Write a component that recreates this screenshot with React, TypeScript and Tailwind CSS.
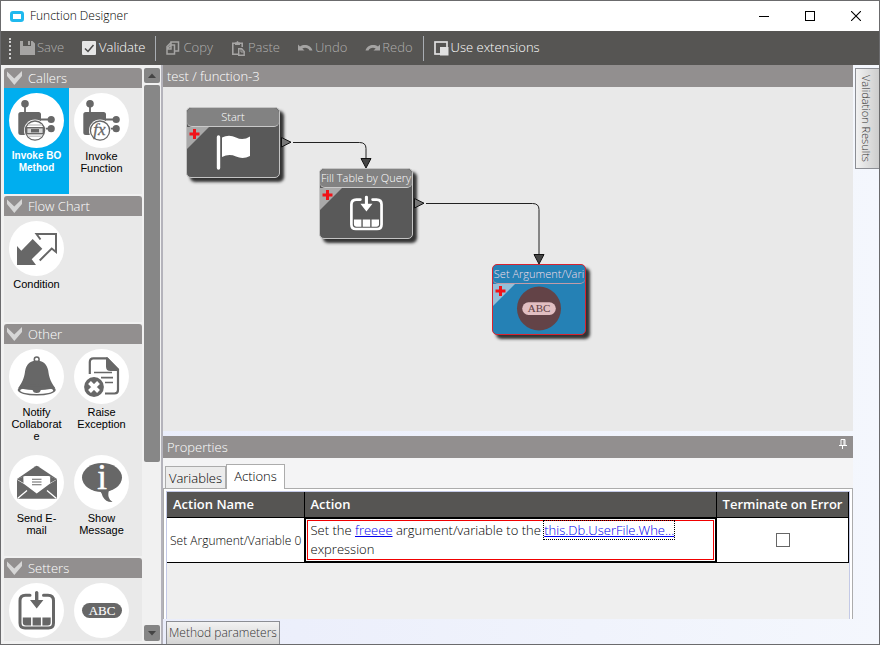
import type { ReactNode } from "react";

const INK = "#676767";

/* ---------- palette icons, all drawn on a 55x55 disc ---------- */

function CallerBase({ children }: { children: ReactNode }) {
  return (
    <>
      <circle cx="16" cy="10.7" r="3.8" fill={INK} />
      <path d="M16 13v7M31 26.5h11M31 35.7h11" stroke={INK} strokeWidth="1.8" />
      <rect x="9.3" y="19" width="22.7" height="23" rx="2.5" fill={INK} />
      <circle cx="42.2" cy="26.5" r="3.6" fill={INK} />
      <circle cx="42.2" cy="35.7" r="3.6" fill={INK} />
      <circle cx="26" cy="37.6" r="11" fill="#fff" />
      <circle cx="26" cy="37.6" r="9.6" fill="#fff" stroke={INK} strokeWidth="1.3" />
      {children}
    </>
  );
}

function InvokeMethodIcon() {
  return (
    <CallerBase>
      <path d="M19 32h14M19 43.300h14" stroke="#c9c9c9" strokeWidth="1.500" />
      <rect x="17.700" y="34.700" width="16.600" height="6" fill="#d4d4d4" stroke={INK} strokeWidth="1.400" />
      <rect x="22" y="36" width="8" height="3.400" fill={INK} />
    </CallerBase>
  );
}

function InvokeFunctionIcon() {
  return (
    <CallerBase>
      <text x="25.5" y="42" textAnchor="middle" fontFamily="Liberation Serif, serif" fontStyle="italic" fontWeight="400" fontSize="17" fill={INK} stroke={INK} strokeWidth=".3">
        fx
      </text>
    </CallerBase>
  );
}

function ConditionIcon() {
  return (
    <>
      <path d="M8 25l4.300 4.700L23.700 18l9.600 9.700-10.600 10.600L27 44H8z" fill={INK} />
      <path d="M31.500 18.500l-4-5.500H47v18l-4.300-3.500-12 12" fill="none" stroke={INK} strokeWidth="2" />
    </>
  );
}

function BellIcon() {
  return (
    <>
      <circle cx="27.700" cy="10.500" r="2.400" fill="none" stroke={INK} strokeWidth="1.500" />
      <path d="M27.700 11.500c6 0 10.300 3.500 11.500 10 .8 5.500 1.300 9.500 7 17.500H9.200c5.700-8 6.200-12 7-17.500 1.200-6.500 5.500-10 11.500-10z" fill={INK} />
      <ellipse cx="27.700" cy="41" rx="19" ry="5.500" fill={INK} />
      <ellipse cx="27.700" cy="41.500" rx="16.500" ry="3.500" fill="#fff" />
      <path d="M23.500 40.500h8.400q-.5 3.500-4.200 3.500t-4.200-3.500z" fill={INK} />
      <path d="M11 39.500q16.700 3.500 33.400 0l-3-2H14z" fill={INK} />
    </>
  );
}

function ExceptionIcon() {
  return (
    <>
      <path d="M15.800 25V13q0-3.600 3.600-3.600H33L44 20.500V41q0 3.500-3.500 3.500H31" fill="none" stroke={INK} strokeWidth="2.200" />
      <path d="M32 8.500h1.500L45 20.500V22h-8.500Q32 22 32 17.500z" fill={INK} />
      <path d="M20 23.500h9M24 23.500h14M27 28.700h12M31 33.500h8" stroke={INK} strokeWidth="1.700" />
      <circle cx="20" cy="38" r="11" fill="#fff" />
      <circle cx="20" cy="38" r="9.900" fill={INK} />
      <path d="M15.500 33.500l9 9m0-9l-9 9" stroke="#fff" strokeWidth="4" />
    </>
  );
}

function MailIcon() {
  return (
    <>
      <path d="M8 24L26.500 11.200q1.200-.7 2.400 0L48 24v19.700H8z" fill={INK} />
      <path d="M7.500 24.500l7-3q.5-.5 1.500-.5h23.500q1 0 1.500.5l7 3-7.500 4.500-12.800 9.500L15 29z" fill="#fff" />
      <path d="M14.300 21.500L8 24.200 14.500 28z" fill={INK} />
      <path d="M41.200 21.500l6.800 2.700-6.800 3.800z" fill={INK} />
      <path d="M23 24.300h9.500M23 27h9.500M23 29.700h9.500" stroke={INK} strokeWidth="1.100" />
      <path d="M8.500 43.500l9.500-8M47.500 43.500l-9.500-8" stroke="#fff" strokeWidth="1.300" />
    </>
  );
}

function MessageIcon() {
  return (
    <>
      <ellipse cx="28" cy="22.500" rx="20" ry="14.500" fill={INK} />
      <path d="M23 35c5 1.500 4.500 4 6 7 1.700 3.300 5 5.300 9.500 5-4-3-5-6.500-3.500-12z" fill={INK} />
      <text x="28" y="34" textAnchor="middle" fontFamily="Liberation Serif, serif" fontSize="35" fill="#fff" stroke="#fff" strokeWidth=".5">
        i
      </text>
    </>
  );
}

function FillTableShape({ color }: { color: string }) {
  return (
    <>
      <path d="M21 12.300h-4.500q-5.500 0-5.500 5.500V40q0 5 5 5h23.500q5 0 5-5V17.800q0-5.500-5.500-5.500H34.500" fill="none" stroke={color} strokeWidth="3" strokeLinecap="round" />
      <path d="M26 9.500q0-1.500 1.700-1.500t1.700 1.500V17h5l-6.700 8.500L21 17h5z" fill={color} />
      <path d="M13.800 34.500h8.300v8h-5.300q-3 0-3-3zM23.600 34.500h8.300v8h-8.300zM33.400 34.500h8.300v5q0 3-3 3h-5.300z" fill={color} />
    </>
  );
}

function AbcShape({ pill, text }: { pill: string; text: string }) {
  return (
    <>
      <rect x="8" y="20" width="40" height="15" rx="7.500" fill={pill} />
      <text x="28" y="32" textAnchor="middle" fontFamily="Liberation Serif, serif" fontWeight="400" fontSize="13" fill={text} stroke={text} strokeWidth=".1">
        ABC
      </text>
    </>
  );
}

/* ---------- palette ---------- */

type Tool = { label: string; icon: ReactNode; selected?: boolean };

const sections: { title: string; tools: Tool[] }[] = [
  {
    title: "Callers",
    tools: [
      { label: "Invoke BO Method", icon: <InvokeMethodIcon />, selected: true },
      { label: "Invoke Function", icon: <InvokeFunctionIcon /> },
    ],
  },
  { title: "Flow Chart", tools: [{ label: "Condition", icon: <ConditionIcon /> }] },
  {
    title: "Other",
    tools: [
      { label: "Notify Collaborate", icon: <BellIcon /> },
      { label: "Raise Exception", icon: <ExceptionIcon /> },
      { label: "Send E-mail", icon: <MailIcon /> },
      { label: "Show Message", icon: <MessageIcon /> },
    ],
  },
  {
    title: "Setters",
    tools: [
      { label: "", icon: <FillTableShape color={INK} /> },
      { label: "", icon: <AbcShape pill={INK} text="#fff" /> },
    ],
  },
];

function ToolButton({ tool }: { tool: Tool }) {
  return (
    <button
      type="button"
      className={
        tool.selected
          ? "flex h-[106px] w-[65px] flex-col items-center gap-[2px] bg-[#00aeef] pt-[5px] font-bold text-white"
          : "flex h-[106px] w-[65px] flex-col items-center gap-[2px] pt-[5px] font-normal text-black"
      }
    >
      <svg width="55" height="55" viewBox="0 0 55 55" className="shrink-0 rounded-full bg-white" aria-hidden="true">
        {tool.icon}
      </svg>
      <span
        className={
          tool.selected
            ? "w-[54px] font-['Liberation_Sans',sans-serif] text-[10px] leading-[12px] break-words"
            : "w-[54px] font-['Liberation_Sans',sans-serif] text-[11px] leading-[12px] break-words"
        }
      >
        {tool.label}
      </span>
    </button>
  );
}

function Palette() {
  return (
    <aside className="flex shrink-0 gap-[2px] border-r-2 border-[#b4b3bb] bg-[#f1f1f1] pt-[3px] pb-[3px] pl-[3px]">
      <div className="flex w-[138px] flex-col gap-[2px] overflow-hidden">
        {sections.map((s) => (
          <section key={s.title} className="shrink-0 bg-[#e9e9e9]">
            <h2 className="flex h-5 items-center gap-[6px] rounded-t-[3px] bg-[#928f8f] pl-[3px] text-[13px] text-white">
              <svg width="15" height="14" viewBox="0 0 15 14" aria-hidden="true">
                <path d="M0 .5l7.300 7L15 0v5l-7.700 9L0 5z" fill="#d6d6d6" />
              </svg>
              <span className="pt-[2px]">{s.title}</span>
            </h2>
            <div className="flex flex-wrap">
              {s.tools.map((t, i) => (
                <ToolButton key={i} tool={t} />
              ))}
            </div>
          </section>
        ))}
      </div>
      <div className="flex w-[17px] flex-col gap-[2px] pr-px">
        <button type="button" aria-label="Scroll up" className="flex h-[15px] items-center justify-center rounded-[2px] bg-[#858585]">
          <svg width="8" height="5" viewBox="0 0 8 5"><path d="M0 5l4-4.500L8 5z" fill="#444" /></svg>
        </button>
        <div className="flex flex-1 flex-col">
          <div className="h-[70%] rounded-[2px] bg-[#878787]" />
        </div>
        <button type="button" aria-label="Scroll down" className="flex h-4 items-center justify-center rounded-[2px] bg-[#858585]">
          <svg width="8" height="5" viewBox="0 0 8 5"><path d="M0 0h8L4 4.500z" fill="#444" /></svg>
        </button>
      </div>
    </aside>
  );
}

/* ---------- title bar and toolbar ---------- */

function TitleBar() {
  return (
    <header className="flex h-[30px] shrink-0 items-center bg-white pl-[9px]">
      <svg width="14" height="11" viewBox="0 0 14 11" aria-hidden="true">
        <rect x="1.500" y="1.500" width="11" height="8" rx="1.500" fill="none" stroke="#1fb9ee" strokeWidth="3" />
      </svg>
      <h1 className="ml-[6px] flex-1 text-xs text-black">Function Designer</h1>
      <div className="flex">
        <button type="button" aria-label="Minimize" className="flex w-[46px] justify-center">
          <svg width="10" height="10"><path d="M0 5.500h10" stroke="#000" /></svg>
        </button>
        <button type="button" aria-label="Maximize" className="flex w-[46px] justify-center">
          <svg width="10" height="10"><rect x=".5" y=".5" width="9" height="9" fill="none" stroke="#000" /></svg>
        </button>
        <button type="button" aria-label="Close" className="flex w-[46px] justify-center">
          <svg width="10" height="10"><path d="M0 0l10 10M10 0L0 10" stroke="#000" strokeWidth="1.100" /></svg>
        </button>
      </div>
    </header>
  );
}

function ToolbarButton({ label, icon, enabled }: { label: string; icon: ReactNode; enabled?: boolean }) {
  return (
    <button
      type="button"
      disabled={!enabled}
      className={
        enabled
          ? "flex items-center gap-[2px] px-[9px] text-[13px] text-white"
          : "flex items-center gap-[2px] px-[9px] text-[13px] text-[#b0afae]"
      }
    >
      <svg width="15" height="15" viewBox="0 0 15 15" aria-hidden="true">{icon}</svg>
      {label}
    </button>
  );
}

function Separator() {
  return <div className="mx-px h-[25px] w-px bg-[#a9adb3]" />;
}

function Toolbar() {
  return (
    <div className="flex h-[34px] shrink-0 items-center bg-[#565553] pl-[8px]">
      <div className="h-[21px] border-l-2 border-dotted border-[#d0d0d0]" />
      <ToolbarButton
        label="Save"
        icon={<path d="M0 0h3v5h8V0h1.500L15 2.500V14H0zM8 0h2v4H8z" fill="#a5a4a3" />}
      />
      <ToolbarButton
        enabled
        label="Validate"
        icon={
          <>
            <rect width="14" height="14" rx="1" fill="#e6e6e6" />
            <path d="M3 7.500l3 3 5.500-6.500" fill="none" stroke="#4a4a4a" strokeWidth="1.500" />
          </>
        }
      />
      <Separator />
      <ToolbarButton
        label="Copy"
        icon={
          <path
            d="M5 3.500V1h7.500v9H9M5 1.500L1 5.500V13h7.500V4H5L1 8M5 4v4H1"
            fill="none"
            stroke="#a5a4a3"
            strokeWidth="1.500"
          />
        }
      />
      <ToolbarButton
        label="Paste"
        icon={
          <>
            <path d="M7 13.200H1.800V2.300h9.400V6" fill="none" stroke="#a5a4a3" strokeWidth="1.600" />
            <path d="M4 1.500h1.500q0-1.500 1-1.500t1 1.500H9V4H4z" fill="#a5a4a3" />
            <path d="M7.700 7.700h3l2.500 2.800v3.700H7.700z" fill="none" stroke="#a5a4a3" strokeWidth="1.400" />
            <path d="M10 7v4h4" fill="none" stroke="#a5a4a3" />
          </>
        }
      />
      <ToolbarButton
        label="Undo"
        icon={<path d="M0 3.500l2 2C6 3 12.500 3.500 14.500 9.500h-3C10.500 7 7 6 4.300 7.500L6.500 9.500H0z" fill="#a5a4a3" />}
      />
      <ToolbarButton
        label="Redo"
        icon={<path d="M15 3.500l-2 2C9 3 2.500 3.500.5 9.500h3C4.500 7 8 6 10.700 7.500L8.500 9.500H15z" fill="#a5a4a3" />}
      />
      <Separator />
      <ToolbarButton
        enabled
        label="Use extensions"
        icon={
          <>
            <rect x="1" y="1" width="12" height="12" fill="none" stroke="#e0e0e0" strokeWidth="1.700" />
            <rect x="6" y="6" width="8.500" height="8.500" fill="#e0e0e0" />
          </>
        }
      />
    </div>
  );
}

/* ---------- diagram ---------- */

function FlowNode({
  title,
  className,
  selected,
  children,
}: {
  title: string;
  className: string;
  selected?: boolean;
  children: ReactNode;
}) {
  return (
    <div className={`absolute w-[94px] ${className}`}>
      <div
        className={
          selected
            ? "relative overflow-hidden rounded-[5px] border border-[#d8232f] bg-[#2581b5] shadow-[4px_4px_3px_#333]"
            : "relative overflow-hidden rounded-[5px] border border-[#c4c4c4] bg-[#595959] shadow-[4px_4px_3px_#333]"
        }
      >
        <div
          className={
            selected
              ? "h-[19px] rounded-[5px] border-b border-[#c29ca8] text-center text-[11px] leading-[17px] whitespace-nowrap text-[#f3dfe8]"
              : "h-[19px] rounded-[5px] border-b border-[#c9c9c9] bg-[#828282] text-center text-[11px] leading-[17px] whitespace-nowrap text-white"
          }
        >
          {title}
        </div>
        <svg width="92" height="50" viewBox="0 0 92 50" className="block" aria-hidden="true">
          <path d="M0 0h22L0 22z" fill={selected ? "#94bfd9" : "#a9a9a9"} />
          <path d="M2.500 7h10M7.500 2v10" stroke="#f01218" strokeWidth="3" />
          {children}
        </svg>
      </div>
    </div>
  );
}

function Canvas() {
  return (
    <div className="relative min-h-0 flex-1 overflow-hidden bg-[#e9e9e9]">
      <FlowNode title="Start" className="top-[20px] left-[23px]">
        <path d="M31.500 10v31" stroke="#fff" strokeWidth="3.400" strokeLinecap="round" />
        <path d="M35 10.500q7-3.500 14 0t14-1V29q-7 3.500-14 .5t-14 .5z" fill="#fff" />
      </FlowNode>
      <FlowNode title="Fill Table by Query" className="top-[81px] left-[156px]">
        <g transform="translate(21.500 0.500) scale(.9)">
          <FillTableShape color="#fff" />
        </g>
      </FlowNode>
      <FlowNode title="Set Argument/Vari" selected className="top-[177px] left-[329px]">
        <circle cx="46" cy="24.500" r="22" fill="#634347" />
        <g transform="translate(22.500 1.500) scale(.84)">
          <AbcShape pill="#e2bfc2" text="#634347" />
        </g>
      </FlowNode>
      <svg className="absolute top-0 left-0 h-full w-full" aria-hidden="true">
        <g fill="none" stroke="#222">
          <path d="M130 55.500H196.500q6.500 0 6.500 6V71" />
          <path d="M263 116.500H369.500q6.500 0 6.500 6V167" />
        </g>
        <g fill="#777" stroke="#111">
          <path d="M118.500 50.500v9.500l9.500-4.800z" />
          <path d="M251.500 111.500v9.500l9.500-4.800z" />
        </g>
        <g fill="#444" stroke="#111">
          <path d="M198 71.500h10l-5 9.500z" />
          <path d="M371 167.500h10l-5 9.500z" />
        </g>
      </svg>
    </div>
  );
}

/* ---------- properties ---------- */

function Properties() {
  return (
    <section className="flex h-[183px] shrink-0 flex-col bg-[#f4f4f5]">
      <div className="flex h-[22px] shrink-0 items-center justify-between bg-[#928f8f] pr-[6px] pl-1">
        <h2 className="pt-[2px] text-[13px] text-white">Properties</h2>
        <button type="button" aria-label="Pin" className="mb-[6px]">
          <svg width="8" height="10" viewBox="0 0 8 10">
            <path d="M2 6V.5h4V6M5 0v6M0 6.500h8M3.500 6.500V10" fill="none" stroke="#fff" />
          </svg>
        </button>
      </div>
      <div role="tablist" className="flex h-[30px] shrink-0 items-end pl-[2px] pt-[6px] text-[13px]">
        <button type="button" role="tab" aria-selected="false" className="h-[22px] w-[61px] border border-b-0 border-[#acacac] bg-[#ececec] leading-[22px] text-black">
          Variables
        </button>
        <button type="button" role="tab" aria-selected="true" className="z-10 -mb-px h-[25px] w-[59px] border border-b-0 border-[#acacac] bg-white text-black">
          Actions
        </button>
      </div>
      <div className="min-h-0 flex-1 border border-b-0 border-[#acacac] bg-white px-[2px] pt-[2px]">
        <div className="h-full border border-b-0 border-[#c3c9e6] bg-[#efefef]">
          <table className="w-full table-fixed border-collapse bg-white text-left">
            <thead className="bg-[#565553] text-[13px] text-white">
              <tr className="h-[25px]">
                <th className="w-[137px] border-r border-b border-black py-0 pl-[6px] font-semibold">Action Name</th>
                <th className="border-r border-b border-black py-0 pl-[6px] font-semibold">Action</th>
                <th className="w-[132px] border-r border-b border-black p-0 text-center font-semibold whitespace-nowrap">Terminate on Error</th>
              </tr>
            </thead>
            <tbody>
              <tr className="h-[45px]">
                <td className="border-r border-b border-black pt-[2px] pr-0 pb-0 pl-[3px] text-xs whitespace-nowrap">Set Argument/Variable 0</td>
                <td className="border border-black p-0">
                  <div className="border border-black bg-white p-px">
                    <p className="border border-[#f00000] pl-[3px] text-[13px] leading-[19px] text-black">
                      Set the <a href="#argument" className="text-[#0000ee] underline">freeee</a> argument/variable to the{" "}
                      <a href="#expression" className="text-[#0000ee] underline outline-1 outline-dotted outline-black">this.Db.UserFile.Whe...</a>
                      <br />
                      expression
                    </p>
                  </div>
                </td>
                <td className="border-r border-b border-black p-0">
                  <input type="checkbox" aria-label="Terminate on Error" className="mx-auto block size-[14px] appearance-none border border-[#666] bg-white" />
                </td>
              </tr>
            </tbody>
          </table>
        </div>
      </div>
    </section>
  );
}

export default function App() {
  return (
    <div className="flex h-screen flex-col border border-[#6b6b6d] bg-white font-['Open_Sans','Noto_Sans',sans-serif] font-[350]">
      <TitleBar />
      <Toolbar />
      <div className="flex min-h-0 flex-1 bg-linear-to-r from-[#e8ebfa] to-[#f4f7fd]">
        <Palette />
        <main className="flex min-w-0 flex-1 flex-col">
          <h2 className="flex h-[22px] shrink-0 items-center bg-[#928f8f] pt-[2px] pl-1 text-[13px] text-white">test / function-3</h2>
          <Canvas />
          <div className="h-[5px] shrink-0" />
          <Properties />
          <div className="flex h-[25px] shrink-0 items-end pl-[3px]">
            <button type="button" className="h-[23px] border border-b-0 border-[#8c8e94] bg-linear-to-b from-[#f2f2f2] to-[#d4d4d4] px-[2px] text-xs text-[#333]">
              Method parameters
            </button>
          </div>
        </main>
        <div className="w-[26px] shrink-0 pt-[3px] pl-[2px]">
          <button type="button" className="h-[101px] w-full border border-r-0 border-[#8c8e94] bg-linear-to-r from-[#f2f2f2] to-[#cdcdcd] pr-1 text-[11px] whitespace-nowrap text-[#333] [writing-mode:vertical-rl]">
            Validation Results
          </button>
        </div>
      </div>
    </div>
  );
}
